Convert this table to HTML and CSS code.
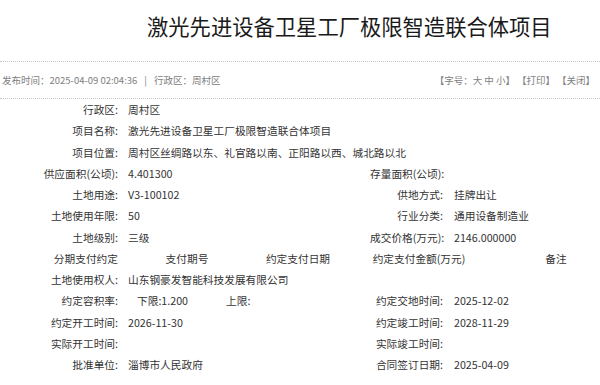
FILE: index.html
```html
<!DOCTYPE html>
<html lang="zh-CN">
<head>
  <meta charset="UTF-8">
  <meta name="viewport" content="width=device-width, initial-scale=1.0">
  <title>激光先进设备卫星工厂极限智造联合体项目</title>
  <link rel="stylesheet" href="styles.css">
</head>
<body>

  <div class="page">
    <h1 class="title">激光先进设备卫星工厂极限智造联合体项目</h1>

    <div class="meta">
      <span>发布时间：2025-04-09 02:04:36<span class="sep">|</span>行政区：周村区</span>
      <span class="tools">
        <span>【字号：大 中 小】</span>
        <span>【打印】</span>
        <span>【关闭】</span>
      </span>
    </div>

    <table class="detail">
      <colgroup>
        <col class="col-label">
        <col class="col-value">
        <col class="col-label2">
        <col class="col-value2">
      </colgroup>
      <tr>
        <td class="label">行政区:</td>
        <td class="value" colspan="3">周村区</td>
      </tr>
      <tr>
        <td class="label">项目名称:</td>
        <td class="value" colspan="3">激光先进设备卫星工厂极限智造联合体项目</td>
      </tr>
      <tr>
        <td class="label">项目位置:</td>
        <td class="value" colspan="3">周村区丝绸路以东、礼官路以南、正阳路以西、城北路以北</td>
      </tr>
      <tr>
        <td class="label">供应面积(公顷):</td>
        <td class="value">4.401300</td>
        <td class="label">存量面积(公顷):</td>
        <td class="value"></td>
      </tr>
      <tr>
        <td class="label">土地用途:</td>
        <td class="value">V3-100102</td>
        <td class="label">供地方式:</td>
        <td class="value">挂牌出让</td>
      </tr>
      <tr>
        <td class="label">土地使用年限:</td>
        <td class="value">50</td>
        <td class="label">行业分类:</td>
        <td class="value">通用设备制造业</td>
      </tr>
      <tr>
        <td class="label">土地级别:</td>
        <td class="value">三级</td>
        <td class="label">成交价格(万元):</td>
        <td class="value">2146.000000</td>
      </tr>
      <tr>
        <td class="label">分期支付约定</td>
        <td colspan="3">
          <div class="pay-head">
            <span class="pay-no">支付期号</span>
            <span class="pay-date">约定支付日期</span>
            <span class="pay-sum">约定支付金额(万元)</span>
            <span class="pay-note">备注</span>
          </div>
        </td>
      </tr>
      <tr>
        <td class="label">土地使用权人:</td>
        <td class="value" colspan="3">山东钢豪发智能科技发展有限公司</td>
      </tr>
      <tr>
        <td class="label">约定容积率:</td>
        <td class="value"><span class="limit">下限:1.200</span><span>上限:</span></td>
        <td class="label">约定交地时间:</td>
        <td class="value">2025-12-02</td>
      </tr>
      <tr>
        <td class="label">约定开工时间:</td>
        <td class="value">2026-11-30</td>
        <td class="label">约定竣工时间:</td>
        <td class="value">2028-11-29</td>
      </tr>
      <tr>
        <td class="label">实际开工时间:</td>
        <td class="value"></td>
        <td class="label">实际竣工时间:</td>
        <td class="value"></td>
      </tr>
      <tr>
        <td class="label">批准单位:</td>
        <td class="value">淄博市人民政府</td>
        <td class="label">合同签订日期:</td>
        <td class="value">2025-04-09</td>
      </tr>
    </table>
  </div>

</body>
</html>
```

FILE: styles.css
```css
body {
  margin: 0;
  font-family: "Noto Sans CJK SC", "Microsoft YaHei", sans-serif;
  color: #333;
  background-color: #fff;
}
.page {
  width: 600px;
  overflow: hidden;
}
.title {
  margin: 0;
  padding: 11px 0 20px 147px;
  font-size: 21.3px;
  line-height: 30px;
  font-weight: normal;
  color: #1a1a1a;
  white-space: nowrap;
}
.meta {
  display: flex;
  justify-content: space-between;
  height: 36px;
  line-height: 36px;
  padding: 0 5px 0 2px;
  border-top: 1px dotted #c8c8c8;
  border-bottom: 1px dotted #c8c8c8;
  font-size: 9.5px;
  color: #808080;
  white-space: nowrap;
}
.meta .sep {
  margin: 0 7px;
}
.tools {
  display: flex;
  gap: 2px;
}
.detail {
  border-collapse: collapse;
  table-layout: fixed;
  width: 600px;
  font-size: 10.7px;
}
.col-label {
  width: 118px;
}
.col-value {
  width: 252px;
}
.col-label2 {
  width: 73px;
}
.detail td {
  height: 21.25px;
  padding: 0;
  white-space: nowrap;
  vertical-align: middle;
}
.detail .label {
  text-align: right;
}
.detail .value {
  padding-left: 10px;
}
.detail td:nth-child(4).value {
  padding-left: 11px;
}
.pay-head {
  display: flex;
}
.pay-head span {
  text-align: center;
}
.pay-no {
  width: 138px;
}
.pay-date {
  width: 84px;
}
.pay-sum {
  width: 158px;
}
.pay-note {
  width: 88px;
  padding-left: 14px;
}
.limit {
  display: inline-block;
  width: 89px;
  margin-left: 9px;
}
```
